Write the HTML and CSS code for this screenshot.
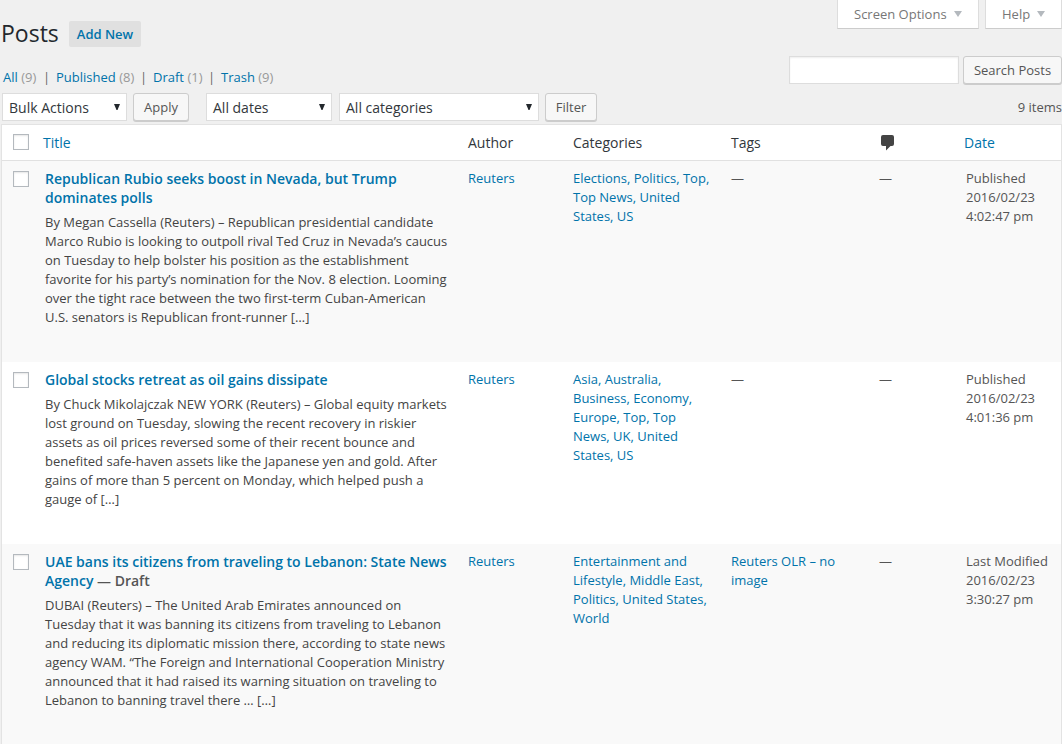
FILE: index.html
```html
<!DOCTYPE html>
<html lang="en">
<head>
<meta charset="utf-8">
<title>Posts</title>
<link rel="stylesheet" href="styles.css">
</head>
<body>
<header class="top">
  <div class="top-left">
    <div class="heading"><h1>Posts</h1><a class="add-new">Add New</a></div>
    <ul class="views">
      <li class="v-all"><a>All</a> <span>(9)</span></li>
      <li class="v-published"><a>Published</a> <span>(8)</span></li>
      <li class="v-draft"><a>Draft</a> <span>(1)</span></li>
      <li class="v-trash"><a>Trash</a> <span>(9)</span></li>
    </ul>
  </div>
  <div class="top-right">
    <div class="screen-meta">
      <div class="meta-tab options">Screen Options<svg width="8" height="6"><path d="M0 0h8L4 6z"/></svg></div>
      <div class="meta-tab help">Help<svg width="8" height="6"><path d="M0 0h8L4 6z"/></svg></div>
    </div>
    <div class="search"><input class="search-input" type="text"><div class="button search-button">Search Posts</div></div>
  </div>
</header>
<div class="tablenav">
  <div class="select bulk"><span>Bulk Actions</span><svg width="6" height="6"><path d="M0 0h6L3.5 6h-1z"/></svg></div>
  <div class="button apply">Apply</div>
  <div class="select dates"><span>All dates</span><svg width="6" height="6"><path d="M0 0h6L3.5 6h-1z"/></svg></div>
  <div class="select cats"><span>All categories</span><svg width="6" height="6"><path d="M0 0h6L3.5 6h-1z"/></svg></div>
  <div class="button filter">Filter</div>
  <div class="count">9 items</div>
</div>
<main class="posts">
  <div class="row head">
    <div class="check"><i class="box"></i></div>
    <div class="h-title link">Title</div>
    <div>Author</div>
    <div>Categories</div>
    <div>Tags</div>
    <div class="h-comment"><svg width="14" height="16"><path d="M2 0h9q2 0 2 2v7q0 2-2 2H9.500L5 15.500V11H2q-2 0-2-2V2q0-2 2-2z"/></svg></div>
    <div class="h-date link">Date</div>
  </div>
  <div class="row post first">
    <div class="check"><i class="box"></i></div>
    <div class="title-cell"><h2>Republican Rubio seeks boost in Nevada, but Trump<br>dominates polls</h2>
      <p>By Megan Cassella (Reuters) – Republican presidential candidate<br>Marco Rubio is looking to outpoll rival Ted Cruz in Nevada’s caucus<br>on Tuesday to help bolster his position as the establishment<br>favorite for his party’s nomination for the Nov. 8 election. Looming<br>over the tight race between the two first-term Cuban-American<br>U.S. senators is Republican front-runner […]</p></div>
    <div class="link">Reuters</div>
    <div class="link">Elections, Politics, Top,<br>Top News, United<br>States, US</div>
    <div>—</div>
    <div>—</div>
    <div class="date">Published<br>2016/02/23<br>4:02:47 pm</div>
  </div>
  <div class="row post second">
    <div class="check"><i class="box"></i></div>
    <div class="title-cell"><h2>Global stocks retreat as oil gains dissipate</h2>
      <p>By Chuck Mikolajczak NEW YORK (Reuters) – Global equity markets<br>lost ground on Tuesday, slowing the recent recovery in riskier<br>assets as oil prices reversed some of their recent bounce and<br>benefited safe-haven assets like the Japanese yen and gold. After<br>gains of more than 5 percent on Monday, which helped push a<br>gauge of […]</p></div>
    <div class="link">Reuters</div>
    <div class="link">Asia, Australia,<br>Business, Economy,<br>Europe, Top, Top<br>News, UK, United<br>States, US</div>
    <div>—</div>
    <div>—</div>
    <div class="date">Published<br>2016/02/23<br>4:01:36 pm</div>
  </div>
  <div class="row post third">
    <div class="check"><i class="box"></i></div>
    <div class="title-cell"><h2>UAE bans its citizens from traveling to Lebanon: State News<br>Agency <span class="state">— Draft</span></h2>
      <p>DUBAI (Reuters) – The United Arab Emirates announced on<br>Tuesday that it was banning its citizens from traveling to Lebanon<br>and reducing its diplomatic mission there, according to state news<br>agency WAM. “The Foreign and International Cooperation Ministry<br>announced that it had raised its warning situation on traveling to<br>Lebanon to banning travel there … […]</p></div>
    <div class="link">Reuters</div>
    <div class="link">Entertainment and<br>Lifestyle, Middle East,<br>Politics, United States,<br>World</div>
    <div class="link">Reuters OLR – no<br>image</div>
    <div>—</div>
    <div class="date">Last Modified<br>2016/02/23<br>3:30:27 pm</div>
  </div>
</main>
</body>
</html>
```
FILE: styles.css
```css
* { box-sizing: border-box; }
body {
  margin: 0;
  height: 744px;
  overflow: hidden;
  background: #f0f0f0;
  color: #555;
  font: 13px/19px "Open Sans", sans-serif;
  white-space: nowrap;
}
h1, h2, p, ul { margin: 0; padding: 0; font-weight: 400; }
svg { display: block; flex: none; }
.link, .views a { color: #0073aa; }

.top { display: flex; justify-content: space-between; height: 93px; }
.heading { display: flex; align-items: flex-start; gap: 10px; padding: 21px 0 0 1px; }
h1 { width: 58px; font-size: 23px; line-height: 24px; color: #23282d; }
.add-new {
  width: 72px;
  height: 26px;
  line-height: 26px;
  text-align: center;
  font-weight: 600;
  color: #0073aa;
  background: #e0e0e0;
  border-radius: 2px;
}
.views { display: flex; list-style: none; padding: 21px 0 0 3px; color: #555; }
.views span { color: #999; }
.views li + li::before { content: "|"; display: inline-block; width: 13px; color: #666; }
.v-all { width: 40px; }
.v-published { width: 97px; }
.v-draft { width: 68px; }

.screen-meta { display: flex; justify-content: flex-end; gap: 6px; }
.meta-tab {
  display: flex;
  align-items: center;
  justify-content: space-between;
  height: 29px;
  padding: 0 16px;
  background: #fff;
  border: 1px solid #ddd;
  border-top: 0;
  border-bottom-color: #ccc;
  color: #777;
}
.meta-tab svg { fill: #b4b9be; }
.options { width: 142px; }
.help { width: 77px; }
.search { display: flex; gap: 4px; padding-top: 27px; }
.search-input {
  width: 170px;
  height: 28px;
  border: 1px solid #ddd;
  background: #fff;
  box-shadow: inset 0 1px 2px rgba(0, 0, 0, .07);
}
.button {
  height: 28px;
  line-height: 27px;
  text-align: center;
  border: 1px solid #ccc;
  border-radius: 3px;
  background: #f7f7f7;
  box-shadow: 0 1px 0 #ccc;
  color: #555;
}
.search-button { width: 99px; }

.tablenav { display: flex; height: 31px; padding-left: 2px; }
.select {
  display: flex;
  align-items: center;
  justify-content: space-between;
  height: 28px;
  padding: 0 6px;
  background: #fff;
  border: 1px solid #ddd;
  font-size: 14px;
  color: #32373c;
}
.select svg { margin-bottom: 1px; fill: #23282d; }
.bulk { width: 125px; margin-right: 6px; }
.apply { width: 56px; margin-right: 17px; }
.dates { width: 126px; margin-right: 7px; }
.cats { width: 200px; margin-right: 6px; }
.filter { width: 52px; }
.count { margin-left: auto; padding-top: 5px; }

.posts { margin-left: 1px; border: 1px solid #e3e3e3; }
.row {
  display: grid;
  grid-template-columns: 41px 425px 105px 158px 148px 87px 1fr;
}
.head {
  height: 36px;
  align-items: center;
  background: #fff;
  border-bottom: 1px solid #e1e1e1;
  font-size: 14px;
  color: #32373c;
}
.head .link { color: #0073aa; }
.check { padding-left: 11px; }
.head .check { padding-bottom: 1px; }
.box {
  display: block;
  width: 16px;
  height: 16px;
  background: #fff;
  border: 1px solid #b4b9be;
  box-shadow: inset 0 1px 2px rgba(0, 0, 0, .1);
}
.h-comment { padding-left: 2px; }
.h-comment svg { fill: #444; }
.h-date { margin-left: -2px; }
.post { padding-top: 8px; }
.post .check { padding-top: 2px; }
.first { height: 201px; background: #f9f9f9; }
.second { height: 182px; background: #fff; }
.third { height: 201px; background: #f9f9f9; }
.title-cell { padding-left: 2px; }
h2 { font-size: 14px; line-height: 19px; font-weight: 600; color: #0073aa; }
.state { color: #555; }
.title-cell p { padding-top: 6px; color: #444; }
```
